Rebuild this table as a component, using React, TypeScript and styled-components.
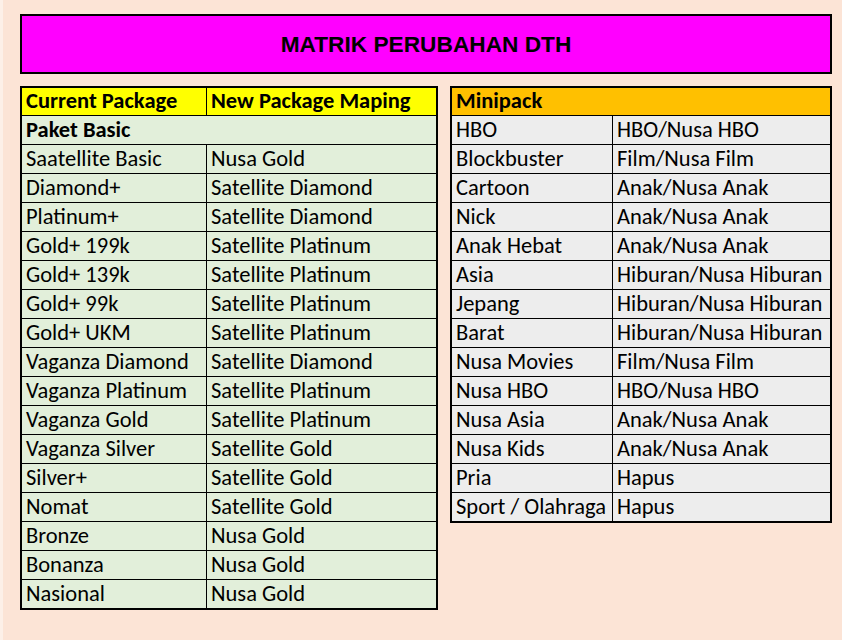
import React from 'react';
import styled, { createGlobalStyle } from 'styled-components';

const GlobalStyle = createGlobalStyle`
  html, body {
    margin: 0;
    padding: 0;
    background: #fce4d6;
  }
`;

const Page = styled.div`
  width: 842px;
  height: 640px;
  box-sizing: border-box;
  padding: 14px 10px 0 17px;
  background: #fce4d6;
  border-left: 3px solid #fdf0e8;
  font-family: Carlito, Calibri, 'Open Sans', sans-serif;
  color: #000;
`;

const TitleBox = styled.div`
  height: 60px;
  box-sizing: border-box;
  border: 2px solid #000;
  background: #ff00ff;
  display: flex;
  align-items: center;
  justify-content: center;
  font-family: 'Liberation Sans', Arial, sans-serif;
  font-weight: bold;
  font-size: 22.7px;
  padding-top: 1px;
`;

const Tables = styled.div`
  display: flex;
  align-items: flex-start;
  gap: 12px;
  margin-top: 12px;
`;

const Sheet = styled.div<{ $width: number; $fill: string }>`
  width: ${(p) => p.$width}px;
  box-sizing: border-box;
  border: 2px solid #000;
  background: ${(p) => p.$fill};
`;

const Row = styled.div<{ $cols: string; $first?: boolean; $fill?: string }>`
  display: grid;
  grid-template-columns: ${(p) => p.$cols};
  box-sizing: border-box;
  height: ${(p) => (p.$first ? 27 : 29)}px;
  border-top: ${(p) => (p.$first ? 'none' : '1px solid #000')};
  background: ${(p) => p.$fill || 'transparent'};
`;

const Cell = styled.div<{ $bold?: boolean; $span?: boolean }>`
  display: flex;
  align-items: flex-end;
  padding: 0 0 1px 4px;
  font-size: 22.5px;
  line-height: 26px;
  font-weight: ${(p) => (p.$bold ? 'bold' : 'normal')};
  white-space: nowrap;
  overflow: hidden;
  grid-column: ${(p) => (p.$span ? '1 / -1' : 'auto')};
  & + & {
    border-left: 1px solid #000;
  }
`;

const packages: [string, string][] = [
  ['Saatellite Basic', 'Nusa Gold'],
  ['Diamond+', 'Satellite Diamond'],
  ['Platinum+', 'Satellite Diamond'],
  ['Gold+ 199k', 'Satellite Platinum'],
  ['Gold+ 139k', 'Satellite Platinum'],
  ['Gold+ 99k', 'Satellite Platinum'],
  ['Gold+ UKM', 'Satellite Platinum'],
  ['Vaganza Diamond', 'Satellite Diamond'],
  ['Vaganza Platinum', 'Satellite Platinum'],
  ['Vaganza Gold', 'Satellite Platinum'],
  ['Vaganza Silver', 'Satellite Gold'],
  ['Silver+', 'Satellite Gold'],
  ['Nomat', 'Satellite Gold'],
  ['Bronze', 'Nusa Gold'],
  ['Bonanza', 'Nusa Gold'],
  ['Nasional', 'Nusa Gold'],
];

const minipacks: [string, string][] = [
  ['HBO', 'HBO/Nusa HBO'],
  ['Blockbuster', 'Film/Nusa Film'],
  ['Cartoon', 'Anak/Nusa Anak'],
  ['Nick', 'Anak/Nusa Anak'],
  ['Anak Hebat', 'Anak/Nusa Anak'],
  ['Asia', 'Hiburan/Nusa Hiburan'],
  ['Jepang', 'Hiburan/Nusa Hiburan'],
  ['Barat', 'Hiburan/Nusa Hiburan'],
  ['Nusa Movies', 'Film/Nusa Film'],
  ['Nusa HBO', 'HBO/Nusa HBO'],
  ['Nusa Asia', 'Anak/Nusa Anak'],
  ['Nusa Kids', 'Anak/Nusa Anak'],
  ['Pria', 'Hapus'],
  ['Sport / Olahraga', 'Hapus'],
];

const LEFT_COLS = '184px 1fr';
const RIGHT_COLS = '160px 1fr';

const App = () => {
  return (
    <Page>
      <GlobalStyle />
      <TitleBox>MATRIK PERUBAHAN DTH</TitleBox>
      <Tables>
        <Sheet $width={418} $fill="#e2efda">
          <Row $cols={LEFT_COLS} $first $fill="#ffff00">
            <Cell $bold>Current Package</Cell>
            <Cell $bold>New Package Maping</Cell>
          </Row>
          <Row $cols={LEFT_COLS}>
            <Cell $bold $span>
              Paket Basic
            </Cell>
          </Row>
          {packages.map(([current, next]) => (
            <Row $cols={LEFT_COLS} key={current}>
              <Cell>{current}</Cell>
              <Cell>{next}</Cell>
            </Row>
          ))}
        </Sheet>
        <Sheet $width={382} $fill="#ededed">
          <Row $cols={RIGHT_COLS} $first $fill="#ffc000">
            <Cell $bold $span>
              Minipack
            </Cell>
          </Row>
          {minipacks.map(([name, target]) => (
            <Row $cols={RIGHT_COLS} key={name}>
              <Cell>{name}</Cell>
              <Cell>{target}</Cell>
            </Row>
          ))}
        </Sheet>
      </Tables>
    </Page>
  );
};

export default App;
